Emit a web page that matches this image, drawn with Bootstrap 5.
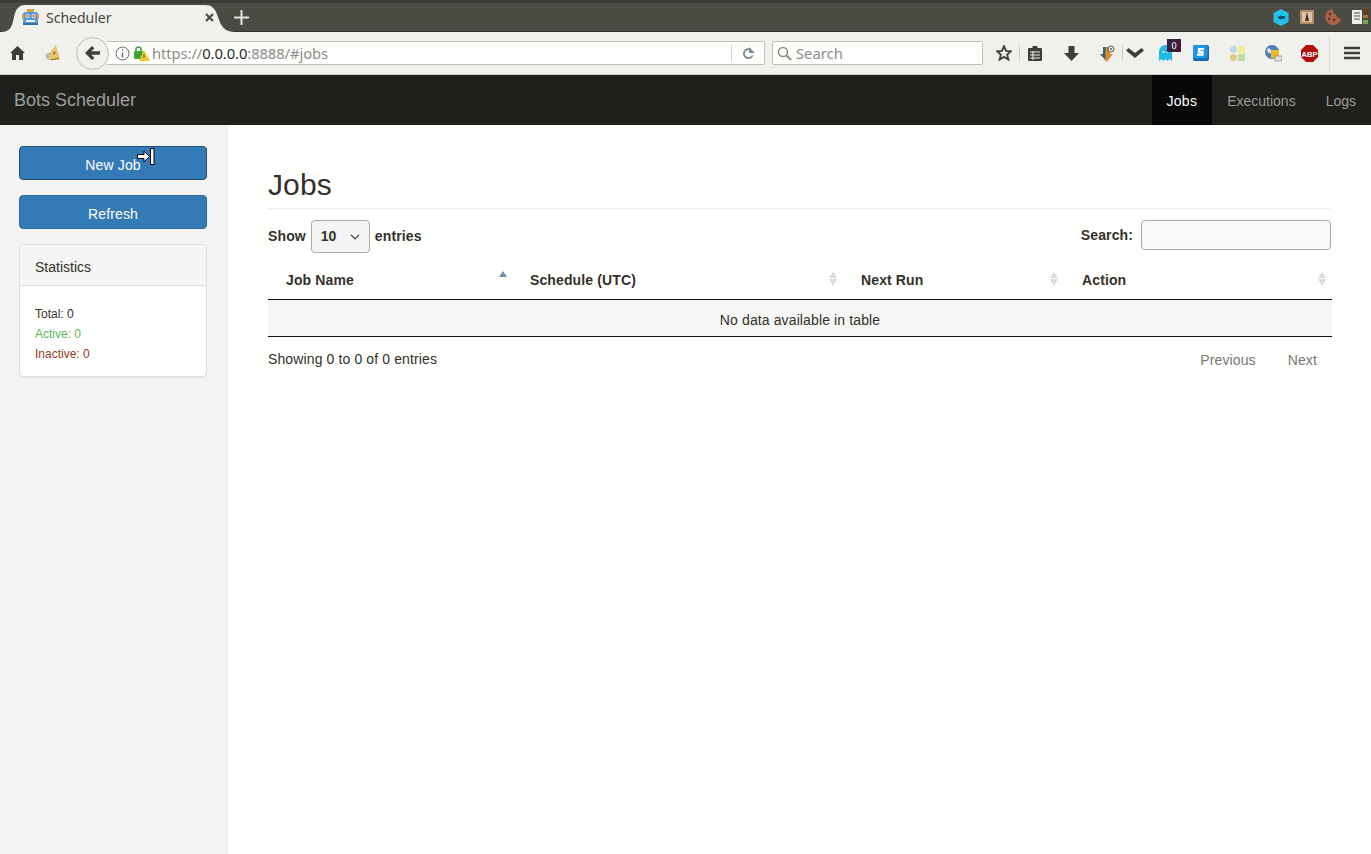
<!DOCTYPE html>
<html lang="en">
<head>
<meta charset="UTF-8">
<title>Scheduler</title>
<meta name="viewport" content="width=device-width, initial-scale=1">
<link href="https://cdn.jsdelivr.net/npm/bootstrap@5.3.3/dist/css/bootstrap.min.css" rel="stylesheet">
<style>
  html, body { height: 100%; }
  body {
    background: #fffffd;
    color: #33312c;
    font-family: "Liberation Sans", Arial, sans-serif;
    font-size: 14px;
    overflow: hidden;
  }

  /* browser chrome */
  .tab-strip {
    height: 32px;
    background: #4c4b43;
    border-top: 3px solid #3b3a35;
    border-bottom: 1px solid #32312c;
    position: relative;
  }
  .tab-shape { position: absolute; left: 0; top: 1px; }
  .tab-inner {
    position: relative;
    height: 28px;
    padding-left: 22px;
    width: 226px;
    font-family: "Noto Sans", "Open Sans", sans-serif;
    font-size: 14px;
    color: #45443e;
  }
  .tab-title { margin-left: 7px; flex: 1; }
  .tab-x { margin-right: 12px; margin-top: 1px; }
  .tab-plus { position: absolute; left: 234px; top: 7px; }
  .tab-tools { position: absolute; right: 3px; top: 4px; }
  .strip-slot { width: 26px; height: 20px; }
  .strip-last { width: 16px; margin-left: 6px; }
  .tool-bar {
    height: 43px;
    background: #f0f0ed;
    border-bottom: 1px solid #d0d0cc;
    font-family: "Noto Sans", "Open Sans", sans-serif;
  }
  .tool-slot { height: 28px; flex: none; position: relative; }
  .w-24 { width: 24px; }
  .w-30 { width: 30px; }
  .w-35 { width: 35px; }
  .w-36 { width: 36px; }
  .w-42 { width: 42px; }
  .tool-sep { width: 1px; height: 16px; background: #cfcfca; flex: none; }
  .back-btn {
    width: 33px; height: 33px;
    border: 1px solid #bdbdb8;
    border-radius: 50%;
    background: #f0f0ed;
    margin-left: 5px;
    margin-right: -2px;
    position: relative;
    z-index: 1;
    flex: none;
  }
  .url-box {
    width: 658px; height: 24px;
    background: #fffffd;
    border: 1px solid #bfbfba;
    border-left: 0;
    border-radius: 0 2px 2px 0;
    font-size: 14.8px;
    color: #8c8c88;
    padding-left: 8px;
    flex: none;
  }
  .url-host { color: #2c2c2a; }
  .url-text { margin-left: 2px; flex: 1; letter-spacing: -.1px; }
  .url-go { width: 33px; height: 16px; border-left: 1px solid #d4d4d0; }
  .find-box {
    width: 211px; height: 24px;
    margin-left: 7px;
    margin-right: 6px;
    background: #fffffd;
    border: 1px solid #bfbfba;
    border-radius: 2px;
    font-size: 14.8px;
    color: #8c8c88;
    padding-left: 4px;
    flex: none;
  }
  .count-tag {
    position: absolute;
    left: 20px; top: 0;
    width: 14px; height: 13px;
    background: #3a1f3c;
    color: #fff;
    font-size: 9px;
    line-height: 13px;
    text-align: center;
  }
  .menu-sep { width: 1px; height: 36px; background: #dcdcd8; margin: 0 14px 0 2px; flex: none; }

  /* app */
  .top-nav {
    height: 50px;
    background: #1f1f1b;
    padding: 0;
  }
  .top-nav .navbar-brand {
    color: #9d9d9d;
    font-size: 18px;
    padding: 0;
    margin-left: 14px;
  }
  .top-nav .nav-link {
    color: #9d9d9d;
    height: 50px;
    line-height: 20px;
    padding: 16px 15px 14px;
    font-size: 14px;
  }
  .top-nav .nav-link.active { color: #fff; background: #080808; letter-spacing: .25px; }
  .side-col {
    width: 228px;
    flex: none;
    background: #f3f4f1;
    border-right: 1px solid #ebebe8;
    padding: 21px 20px 0 19px;
  }
  .side-btn {
    height: 34px;
    background: #337ab7;
    border: 1px solid #2e6da4;
    border-radius: 4px;
    color: #fff;
    font-size: 14px;
    letter-spacing: .15px;
    padding: 8px 12px 6px;
    line-height: 20px;
    margin-bottom: 15px;
  }
  .side-btn.focused { border-color: #204d74; }
  .stat-card {
    border-color: #ddd;
    border-radius: 4px;
    box-shadow: 0 1px 1px rgba(0,0,0,.05);
    background: #fffffd;
  }
  .stat-card .card-header {
    height: 41px;
    padding: 12px 15px;
    line-height: 20px;
    background: #f5f5f3;
    border-bottom-color: #ddd;
    font-size: 14px;
    color: #33312c;
  }
  .stat-card .card-body {
    padding: 18px 15px 12px;
    font-size: 12px;
    line-height: 20px;
  }
  .stat-on { color: #5cb85c; }
  .stat-off { color: #953b27; }
  .main-col { flex: 1; padding: 0 39px 0 40px; letter-spacing: .12px; }
  .page-head {
    font-size: 30px;
    line-height: 33px;
    font-weight: 400;
    margin: 43px 0 0;
    padding-bottom: 7px;
    border-bottom: 1px solid #eee;
    height: 41px;
    margin-right: 1px;
  }
  .list-top { height: 40px; padding-top: 15px; margin-right: 1px; font-weight: 700; }
  .len-select {
    width: 59px; height: 33px;
    padding: 4px 20px 4px 9px;
    font-size: 14px;
    font-weight: 700;
    color: #33312c;
    border-color: #aaa;
    background-color: #f4f4f2;
    background-position: right 8px center;
    background-size: 12px 10px;
    border-radius: 4px;
    margin: 0 5px;
  }
  .find-input {
    width: 190px; height: 30px;
    margin-left: 8px;
    border: 1px solid #aaa;
    border-radius: 4px;
    background: #f9f9f7;
    padding: 0 6px;
  }
  .jobs-table { table-layout: fixed; width: 1064px; margin: 11px 0 0; }
  .jobs-table th {
    position: relative;
    height: 39px;
    padding: 2px 18px 0;
    font-size: 14px;
    font-weight: 700;
    color: #33312c;
    background: transparent;
    border-bottom: 1px solid #111;
    vertical-align: middle;
  }
  .jobs-table td {
    height: 37px;
    padding: 5px 0 0;
    font-size: 14px;
    color: #33312c;
    text-align: center;
    vertical-align: middle;
    background: #f6f6f4;
    border-bottom: 1px solid #111;
  }
  .sort-up, .sort-down {
    position: absolute;
    right: 6px;
    width: 0; height: 0;
    border-left: 4px solid transparent;
    border-right: 4px solid transparent;
  }
  .sort-up { top: 12px; border-bottom: 6px solid #dcdcd9; }
  .sort-down { top: 19px; border-top: 7px solid #dcdcd9; }
  .sort-up.on { border-bottom-color: #6d8fb5; right: 5px; top: 11px; }
  .list-foot { margin-top: 12px; margin-right: 0; line-height: 20px; }
  .page-btn { color: #777; padding: 1px 15px 0 17px; margin-left: 0; }
  .mouse-mark { position: absolute; left: 136px; top: 147px; z-index: 5; }
</style>
</head>
<body class="d-flex flex-column">

<!-- browser tab strip -->
<div class="tab-strip flex-none">
  <svg class="tab-shape" width="240" height="28" viewBox="0 0 240 28">
    <path d="M0 28C11 28 12 22 14 13C16 4 19 1 26 1H205C212 1 215 4 218 13C221 22 224 28 236 28Z" fill="#f0f0ed"/>
  </svg>
  <div class="tab-inner d-flex align-items-center">
    <svg width="17" height="17" viewBox="0 0 17 17">
      <rect x="1" y="3" width="15" height="13" rx="2" fill="#5b9bd5"/>
      <rect x="0" y="5" width="2" height="5" fill="#d8a23f"/>
      <rect x="15" y="5" width="2" height="5" fill="#d8a23f"/>
      <rect x="5" y="0" width="7" height="3" fill="#d8a23f"/>
      <circle cx="5.5" cy="7" r="2" fill="#eee"/>
      <circle cx="11.5" cy="7" r="2" fill="#eee"/>
      <circle cx="5.5" cy="7" r="1" fill="#c0392b"/>
      <circle cx="11.5" cy="7" r="1" fill="#c0392b"/>
      <rect x="4" y="11" width="9" height="2" fill="#e8eef5"/>
      <rect x="1" y="14" width="15" height="2" fill="#3d6f9e"/>
    </svg>
    <span class="tab-title">Scheduler</span>
    <svg class="tab-x" width="9" height="9" viewBox="0 0 9 9"><path d="M1 1L8 8M8 1L1 8" stroke="#4a4a45" stroke-width="2.2"/></svg>
  </div>
  <svg class="tab-plus" width="15" height="15" viewBox="0 0 15 15"><path d="M7.5 0V15M0 7.5H15" stroke="#e4e4e0" stroke-width="2"/></svg>
  <div class="tab-tools d-flex align-items-center">
    <div class="strip-slot d-flex align-items-center justify-content-center">
      <svg width="16" height="17" viewBox="0 0 16 17"><path d="M8 0L15.5 4V13L8 17L.5 13V4Z" fill="#22c3e6"/><path d="M4 8.5L8 6V11ZM8 7H12V10H8Z" fill="#17506b"/></svg>
    </div>
    <div class="strip-slot d-flex align-items-center justify-content-center">
      <svg width="14" height="14" viewBox="0 0 14 14"><rect width="14" height="14" rx="1" fill="#b98a68"/><rect x="2" y="2" width="10" height="10" fill="#dcc4ae"/><path d="M7 2L9 11H5Z" fill="#4a2c22"/></svg>
    </div>
    <div class="strip-slot d-flex align-items-center justify-content-center">
      <svg width="16" height="16" viewBox="0 0 16 16"><path d="M8 0A8 8 0 1 0 16 10L12 8L11 5L8 4Z" fill="#a8624a"/><circle cx="5" cy="5" r="1.2" fill="#5a2a1a"/><circle cx="4" cy="10" r="1.2" fill="#5a2a1a"/><circle cx="9" cy="11" r="1.2" fill="#5a2a1a"/></svg>
    </div>
    <div class="strip-slot strip-last d-flex align-items-center">
      <svg width="16" height="16" viewBox="0 0 16 16"><rect y="1" width="10" height="14" fill="#ecece8"/><path d="M2 4H8M2 7H8M2 10H8" stroke="#555" stroke-width="1"/><rect x="11" width="5" height="5" fill="#6b3a24"/><rect x="11" y="6" width="5" height="3" fill="#a8743a"/><rect x="11" y="11" width="5" height="4" fill="#7aa35a"/></svg>
    </div>
  </div>
</div>

<!-- browser toolbar -->
<div class="tool-bar d-flex align-items-center flex-none">
  <div class="tool-slot w-35 d-flex align-items-center justify-content-center">
    <svg width="15" height="14" viewBox="0 0 15 14"><path d="M7.5 0L15 7H13V14H9V9H6V14H2V7H0Z" fill="#3d3d39"/></svg>
  </div>
  <div class="tool-slot w-36 d-flex align-items-center justify-content-center">
    <svg width="16" height="16" viewBox="0 0 16 16"><path d="M11 0L15 15H3C2 12 5 7 11 0Z" fill="#e6c66e"/><path d="M0 11C2 7 5 7 6 9L3 15Z" fill="#bdbdb8"/><path d="M9 6L11 8L8 10Z" fill="#b5532c"/><path d="M6 15L14 13" stroke="#8a6a2c" stroke-width="1"/></svg>
  </div>
  <div class="back-btn d-flex align-items-center justify-content-center">
    <svg width="16" height="14" viewBox="0 0 16 14"><path d="M7 0L9.5 2.2L6.2 5.2H15V8.8H6.2L9.5 11.8L7 14L0 7Z" fill="#3d3d39"/></svg>
  </div>
  <div class="url-box d-flex align-items-center">
    <svg width="15" height="15" viewBox="0 0 15 15"><circle cx="7.5" cy="7.5" r="6.5" fill="none" stroke="#6a6a66"/><path d="M7.5 6.5V11.5M7.5 3.5V5" stroke="#6a6a66" stroke-width="1.4"/></svg>
    <svg class="ms-1" width="16" height="15" viewBox="0 0 16 15"><rect x="0" y="5" width="9" height="8" rx="1" fill="#3fa33a"/><path d="M2 5V3.5A2.5 2.5 0 0 1 7 3.5V5" fill="none" stroke="#3fa33a" stroke-width="1.6"/><path d="M10 4L16 15H5Z" fill="#f4c92f"/><path d="M10 8V12" stroke="#555" stroke-width="1"/></svg>
    <span class="url-text">https://<span class="url-host">0.0.0.0</span>:8888/#jobs</span>
    <div class="url-go d-flex align-items-center justify-content-center">
      <svg width="13" height="13" viewBox="0 0 13 13"><path d="M10.5 8.5A4.5 4.5 0 1 1 9 3" fill="none" stroke="#7c8a94" stroke-width="1.8"/><path d="M7 0V6H13Z" fill="#7c8a94"/></svg>
    </div>
  </div>
  <div class="find-box d-flex align-items-center">
    <svg width="15" height="15" viewBox="0 0 15 15"><circle cx="6" cy="6" r="4.5" fill="none" stroke="#8c8c88" stroke-width="1.6"/><path d="M9.5 9.5L14 14" stroke="#8c8c88" stroke-width="2"/></svg>
    <span class="ms-1">Search</span>
  </div>
  <div class="tool-slot w-30 d-flex align-items-center justify-content-center">
    <svg width="16" height="16" viewBox="0 0 16 16"><path d="M8 1.2L10 5.9L15 6.3L11.2 9.6L12.4 14.6L8 11.9L3.6 14.6L4.8 9.6L1 6.3L6 5.9Z" fill="none" stroke="#3d3d39" stroke-width="1.8"/></svg>
  </div>
  <div class="tool-sep"></div>
  <div class="tool-slot w-30 d-flex align-items-center justify-content-center">
    <svg width="14" height="15" viewBox="0 0 14 15"><path d="M1 2H4.5V0H9.5V2H13A1 1 0 0 1 14 3V14A1 1 0 0 1 13 15H1A1 1 0 0 1 0 14V3A1 1 0 0 1 1 2Z" fill="#3d3d39"/><path d="M2 6H12M2 9H12M2 12H12M5 5V14" stroke="#f0f0ed"/></svg>
  </div>
  <div class="tool-slot w-42 d-flex align-items-center justify-content-center">
    <svg width="15" height="15" viewBox="0 0 15 15"><path d="M4.5 0H10.5V7H15L7.5 15L0 7H4.5Z" fill="#3d3d39"/></svg>
  </div>
  <div class="tool-slot w-30 d-flex align-items-center justify-content-center">
    <svg width="15" height="17" viewBox="0 0 15 17"><path d="M3 2H10V9H13L6.5 17L0 9H3Z" fill="#d98a2b"/><path d="M3 2H5.5V14.5L0 9H3Z" fill="#35607a"/><circle cx="11" cy="4" r="3" fill="#f0f0ed" stroke="#555"/><circle cx="11" cy="4" r="1" fill="#555"/></svg>
  </div>
  <div class="tool-sep"></div>
  <div class="tool-slot w-24 d-flex align-items-center justify-content-center">
    <svg width="18" height="10" viewBox="0 0 18 10"><path d="M0 2.5L2.5 0L9 5L15.5 0L18 2.5L9 10Z" fill="#3d3d39"/></svg>
  </div>
  <div class="tool-slot w-36 d-flex align-items-center justify-content-center">
    <svg width="13" height="16" viewBox="0 0 13 16"><path d="M0 16V6.5A6.5 6.5 0 0 1 13 6.5V16L10.5 14L8.5 16L6.5 14L4.5 16L2.5 14Z" fill="#22b8e6"/><circle cx="4.5" cy="7" r="1" fill="#e8f8fc"/><circle cx="8.5" cy="7" r="1" fill="#e8f8fc"/></svg>
    <span class="count-tag">0</span>
  </div>
  <div class="tool-slot w-36 d-flex align-items-center justify-content-center">
    <svg width="16" height="16" viewBox="0 0 16 16"><rect width="16" height="16" rx="2" fill="#146aa8"/><rect width="14.5" height="13.5" rx="2" fill="#1e95df"/><path d="M11 4H6V6.8H9.5V9.6H4" fill="none" stroke="#fff" stroke-width="2.2"/></svg>
  </div>
  <div class="tool-slot w-36 d-flex align-items-center justify-content-center">
    <svg width="15" height="15" viewBox="0 0 15 15"><circle cx="3.5" cy="3.5" r="3.5" fill="#bcd6ea"/><rect x="8" width="7" height="7" fill="#f2ee90"/><circle cx="3.5" cy="11.5" r="3.5" fill="#e6c98a"/><rect x="8" y="8" width="7" height="7" fill="#bfdca0"/></svg>
  </div>
  <div class="tool-slot w-36 d-flex align-items-center justify-content-center">
    <svg width="17" height="17" viewBox="0 0 17 17"><circle cx="7" cy="7" r="7" fill="#4a7fb5"/><path d="M2 4C5 2 7 5 6 8C4 9 2 8 2 4Z" fill="#d5dfe8"/><rect x="6" y="5" width="8" height="8" fill="#e9b92a"/><rect x="10" y="11" width="7" height="5" fill="#e4e4d8" stroke="#777" stroke-width=".6"/></svg>
  </div>
  <div class="tool-slot w-36 d-flex align-items-center justify-content-center">
    <svg width="17" height="17" viewBox="0 0 17 17"><path d="M5 0H12L17 5V12L12 17H5L0 12V5Z" fill="#b50d0d"/><text x="8.5" y="11.5" font-family="Liberation Sans, sans-serif" font-size="7.5" font-weight="700" fill="#fff" text-anchor="middle">ABP</text></svg>
  </div>
  <div class="menu-sep"></div>
  <svg class="flex-none" width="16" height="14" viewBox="0 0 16 14"><path d="M0 2H16M0 7H16M0 12H16" stroke="#3d3d39" stroke-width="2.6"/></svg>
</div>

<!-- app navbar -->
<nav class="navbar top-nav flex-none">
  <a class="navbar-brand" href="#">Bots Scheduler</a>
  <ul class="navbar-nav flex-row">
    <li class="nav-item"><a class="nav-link active" href="#">Jobs</a></li>
    <li class="nav-item"><a class="nav-link" href="#">Executions</a></li>
    <li class="nav-item"><a class="nav-link" href="#">Logs</a></li>
  </ul>
</nav>

<div class="d-flex flex-grow-1">
  <div class="side-col">
    <button class="btn side-btn focused w-100 d-block">New Job</button>
    <button class="btn side-btn w-100 d-block">Refresh</button>
    <div class="card stat-card">
      <div class="card-header">Statistics</div>
      <div class="card-body">
        <div>Total: 0</div>
        <div class="stat-on">Active: 0</div>
        <div class="stat-off">Inactive: 0</div>
      </div>
    </div>
  </div>

  <div class="main-col">
    <h1 class="page-head">Jobs</h1>

    <div class="list-top d-flex justify-content-between align-items-center">
      <div class="d-flex align-items-center">
        Show
        <select class="form-select len-select"><option>10</option></select>
        entries
      </div>
      <div class="d-flex align-items-center" style="margin-top:-3px">
        Search:
        <input class="find-input" type="search">
      </div>
    </div>

    <table class="table jobs-table">
      <colgroup>
        <col style="width:244px">
        <col style="width:331px">
        <col style="width:221px">
        <col style="width:268px">
      </colgroup>
      <thead>
        <tr>
          <th>Job Name<span class="sort-up on"></span></th>
          <th>Schedule (UTC)<span class="sort-up"></span><span class="sort-down"></span></th>
          <th>Next Run<span class="sort-up"></span><span class="sort-down"></span></th>
          <th>Action<span class="sort-up"></span><span class="sort-down"></span></th>
        </tr>
      </thead>
      <tbody>
        <tr><td colspan="4">No data available in table</td></tr>
      </tbody>
    </table>

    <div class="list-foot d-flex justify-content-between">
      <div>Showing 0 to 0 of 0 entries</div>
      <div class="d-flex">
        <span class="page-btn">Previous</span>
        <span class="page-btn">Next</span>
      </div>
    </div>
  </div>
</div>

<!-- mouse pointer in the capture -->
<svg class="mouse-mark" width="20" height="19" viewBox="0 0 20 19">
  <path d="M1.5 7.5H8V4L13.5 9.5L8 15V11.5H1.5Z" fill="#fff" stroke="#000"/>
  <rect x="14.5" y="1.5" width="3.5" height="16" fill="#fff" stroke="#000"/>
</svg>

<script src="https://cdn.jsdelivr.net/npm/bootstrap@5.3.3/dist/js/bootstrap.bundle.min.js"></script>
</body>
</html>
